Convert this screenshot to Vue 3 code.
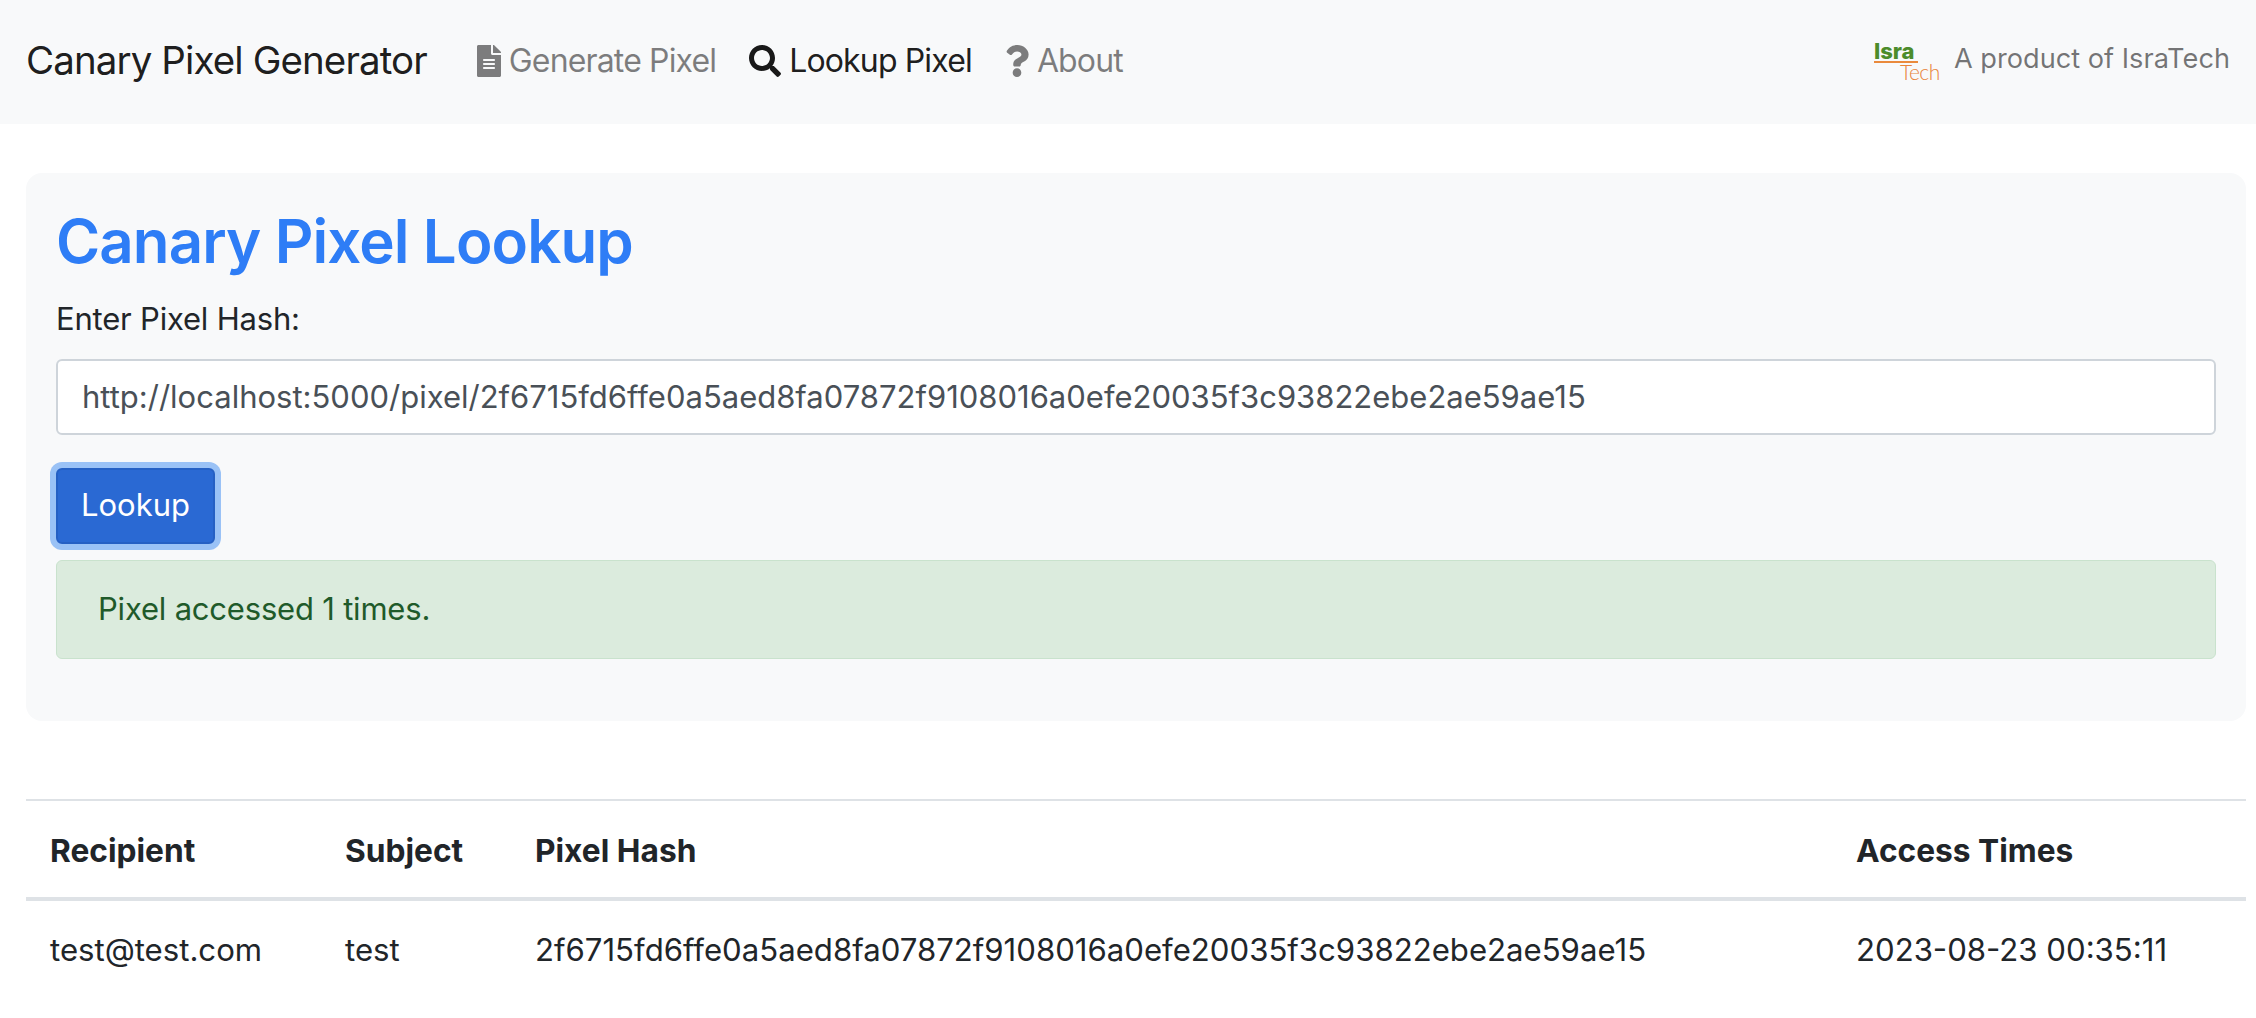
<script setup>
const navLinks = [
  { label: 'Generate Pixel', icon: 'file', active: false },
  { label: 'Lookup Pixel', icon: 'search', active: true },
  { label: 'About', icon: 'question', active: false },
]

const ICONS = {
  file: {
    box: '0 0 384 512',
    d: 'M224 136V0H24C10.7 0 0 10.7 0 24v464c0 13.3 10.7 24 24 24h336c13.3 0 24-10.7 24-24V160H248c-13.2 0-24-10.8-24-24zm64 236c0 6.6-5.4 12-12 12H108c-6.6 0-12-5.4-12-12v-8c0-6.6 5.4-12 12-12h168c6.6 0 12 5.4 12 12v8zm0-64c0 6.6-5.4 12-12 12H108c-6.6 0-12-5.4-12-12v-8c0-6.6 5.4-12 12-12h168c6.6 0 12 5.4 12 12v8zm0-72v8c0 6.6-5.4 12-12 12H108c-6.6 0-12-5.4-12-12v-8c0-6.6 5.4-12 12-12h168c6.6 0 12 5.4 12 12zm96-114.1v6.1H256V0h6.1c6.4 0 12.5 2.5 17 7l97.9 98c4.5 4.5 7 10.6 7 16.9z',
  },
  search: {
    box: '0 0 512 512',
    d: 'M505 442.7L405.3 343c-4.5-4.5-10.6-7-17-7H372c27.6-35.3 44-79.7 44-128C416 93.1 322.9 0 208 0S0 93.1 0 208s93.1 208 208 208c48.3 0 92.7-16.4 128-44v16.3c0 6.4 2.5 12.5 7 17l99.7 99.7c9.4 9.4 24.6 9.4 33.9 0l28.3-28.3c9.4-9.4 9.4-24.6.1-34zM208 336c-70.7 0-128-57.2-128-128 0-70.7 57.2-128 128-128 70.7 0 128 57.2 128 128 0 70.7-57.2 128-128 128z',
  },
  question: {
    box: '0 0 384 512',
    d: 'M202.021 0C122.202 0 70.503 32.703 29.914 91.026c-7.363 10.58-5.093 25.086 5.178 32.874l43.138 32.709c10.373 7.865 25.132 6.026 33.253-4.148 25.049-31.381 43.63-49.449 82.757-49.449 30.764 0 68.816 19.799 68.816 49.631 0 22.552-18.617 34.134-48.993 51.164-35.423 19.86-82.299 44.576-82.299 106.405V320c0 13.255 10.745 24 24 24h72.471c13.255 0 24-10.745 24-24v-5.773c0-42.86 125.268-44.645 125.268-160.627C377.504 66.256 286.902 0 202.021 0zM192 373.459c-38.196 0-69.271 31.075-69.271 69.271 0 38.195 31.075 69.27 69.271 69.27s69.271-31.075 69.271-69.271-31.075-69.27-69.271-69.27z',
  },
}

const pixelHash = '2f6715fd6ffe0a5aed8fa07872f9108016a0efe20035f3c93822ebe2ae59ae15'
</script>

<template>
  <div class="page">
    <nav class="navbar">
      <span class="brand">Canary Pixel Generator</span>
      <a
        v-for="link in navLinks"
        :key="link.label"
        class="nav-link"
        :class="{ active: link.active }"
      >
        <svg class="nav-icon" :viewBox="ICONS[link.icon].box">
          <path fill="currentColor" :d="ICONS[link.icon].d" />
        </svg>
        {{ link.label }}
      </a>
      <div class="product">
        <div class="logo">
          <span class="logo-isra">Isra</span>
          <span class="logo-tech">Tech</span>
        </div>
        <span>A product of IsraTech</span>
      </div>
    </nav>

    <section class="card">
      <h1>Canary Pixel Lookup</h1>
      <label class="field-label">Enter Pixel Hash:</label>
      <input
        class="hash-input"
        type="text"
        :value="'http://localhost:5000/pixel/' + pixelHash"
      />
      <button class="lookup-btn" type="button">Lookup</button>
      <div class="alert">Pixel accessed 1 times.</div>
    </section>

    <table class="results">
      <colgroup>
        <col class="col-recipient" />
        <col class="col-subject" />
        <col class="col-hash" />
        <col />
      </colgroup>
      <thead>
        <tr>
          <th>Recipient</th>
          <th>Subject</th>
          <th>Pixel Hash</th>
          <th>Access Times</th>
        </tr>
      </thead>
      <tbody>
        <tr>
          <td>test@test.com</td>
          <td>test</td>
          <td>{{ pixelHash }}</td>
          <td>2023-08-23 00:35:11</td>
        </tr>
      </tbody>
    </table>
  </div>
</template>

<style>
html,
body {
  margin: 0;
  background: #fff;
}
</style>

<style scoped>
.page {
  font-family: Inter, "Liberation Sans", sans-serif;
  font-size: 31px;
  line-height: 1.5;
  color: #212529;
}

.navbar {
  display: flex;
  align-items: center;
  height: 124px;
  padding: 0 26px 3px;
  background: #f8f9fa;
  box-sizing: border-box;
}

.brand {
  font-size: 38.5px;
  letter-spacing: -0.9px;
  color: rgba(0, 0, 0, 0.9);
  margin-right: 50px;
}

.nav-link {
  display: flex;
  align-items: center;
  gap: 8px;
  color: rgba(0, 0, 0, 0.5);
  margin-right: 33px;
  font-size: 32px;
  letter-spacing: -0.85px;
}

.nav-link.active {
  color: rgba(0, 0, 0, 0.9);
}

.nav-icon {
  height: 32px;
  flex: none;
}

.product {
  margin-left: auto;
  display: flex;
  align-items: center;
  gap: 16px;
  color: rgba(0, 0, 0, 0.55);
  font-size: 27.2px;
  margin-top: -3px;
}

.logo {
  display: flex;
  flex-direction: column;
  width: 64px;
  margin-top: 3px;
}

.logo-isra {
  width: 44px;
  font-weight: 800;
  font-size: 22px;
  line-height: 20px;
  color: #4c8c2b;
  border-bottom: 2px solid #ea8a3c;
}

.logo-tech {
  font-family: Lato, sans-serif;
  font-weight: 300;
  font-size: 21px;
  letter-spacing: -0.5px;
  line-height: 18px;
  color: #e8843a;
  margin-left: 26px;
}

.card {
  margin: 49px 10px 0 26px;
  padding: 32px 30px 30px;
  height: 548px;
  box-sizing: border-box;
  background: #f8f9fa;
  border-radius: 16px;
}

h1 {
  margin: 0 0 19px;
  font-size: 60px;
  font-weight: 600;
  letter-spacing: -0.9px;
  line-height: 1.2;
  color: #2e7df6;
}

.field-label {
  display: block;
  margin-bottom: 16px;
  letter-spacing: -0.2px;
}

.hash-input {
  display: block;
  width: 100%;
  height: 76px;
  box-sizing: border-box;
  padding: 0 24px;
  font: inherit;
  color: #495057;
  background: #fff;
  border: 2px solid #ced4da;
  border-radius: 6px;
  margin-bottom: 33px;
}

.lookup-btn {
  display: block;
  height: 76px;
  width: 159px;
  padding: 0;
  font: inherit;
  color: #fff;
  background: #2a69d3;
  border: 2px solid #2560c4;
  border-radius: 6px;
  box-shadow: 0 0 0 6px #9ac2f6;
  margin-bottom: 16px;
}

.alert {
  height: 99px;
  box-sizing: border-box;
  display: flex;
  align-items: center;
  padding: 0 41px;
  background: #dbebdd;
  border: 1px solid #c9e2cd;
  border-radius: 6px;
  color: #1f5a2a;
  letter-spacing: -0.2px;
}

.results {
  width: 2220px;
  margin: 78px 0 0 26px;
  border-collapse: collapse;
  table-layout: fixed;
}

.col-recipient {
  width: 295px;
}

.col-subject {
  width: 190px;
}

.col-hash {
  width: 1321px;
}

th,
td {
  text-align: left;
  padding: 0 24px;
  white-space: nowrap;
}

th {
  font-size: 31.7px;
  font-weight: 700;
  height: 93px;
  padding-top: 3px;
  border-top: 2px solid #dee2e6;
  border-bottom: 4px solid #dee2e6;
}

td {
  height: 98px;
  font-size: 31.15px;
}
</style>
